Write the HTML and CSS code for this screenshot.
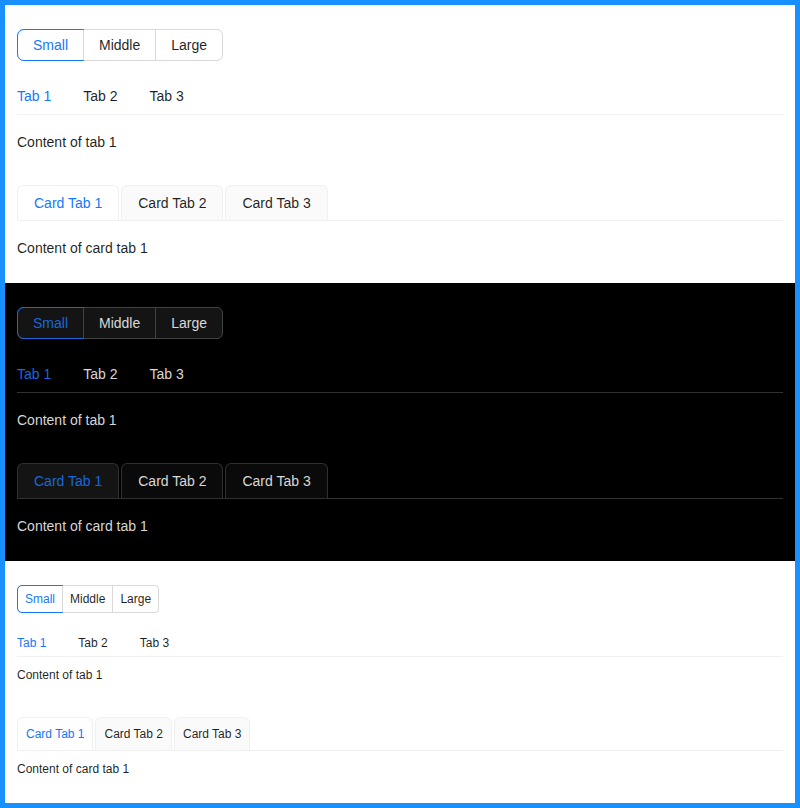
FILE: index.html
```html
<!DOCTYPE html>
<html>
<head>
<meta charset="utf-8">
<link rel="stylesheet" href="styles.css">
</head>
<body>
<div class="frame">
  <section class="demo light">
    <div class="seg">
      <div class="seg-item active">Small</div>
      <div class="seg-item">Middle</div>
      <div class="seg-item">Large</div>
    </div>
    <div class="tabs">
      <div class="tab active">Tab 1</div>
      <div class="tab">Tab 2</div>
      <div class="tab">Tab 3</div>
    </div>
    <div class="content">Content of tab 1</div>
    <div class="cards">
      <div class="card active">Card Tab 1</div>
      <div class="card">Card Tab 2</div>
      <div class="card">Card Tab 3</div>
    </div>
    <div class="content">Content of card tab 1</div>
  </section>
  <section class="demo dark">
    <div class="seg">
      <div class="seg-item active">Small</div>
      <div class="seg-item">Middle</div>
      <div class="seg-item">Large</div>
    </div>
    <div class="tabs">
      <div class="tab active">Tab 1</div>
      <div class="tab">Tab 2</div>
      <div class="tab">Tab 3</div>
    </div>
    <div class="content">Content of tab 1</div>
    <div class="cards">
      <div class="card active">Card Tab 1</div>
      <div class="card">Card Tab 2</div>
      <div class="card">Card Tab 3</div>
    </div>
    <div class="content">Content of card tab 1</div>
  </section>
  <section class="demo light small">
    <div class="seg">
      <div class="seg-item active">Small</div>
      <div class="seg-item">Middle</div>
      <div class="seg-item">Large</div>
    </div>
    <div class="tabs">
      <div class="tab active">Tab 1</div>
      <div class="tab">Tab 2</div>
      <div class="tab">Tab 3</div>
    </div>
    <div class="content">Content of tab 1</div>
    <div class="cards">
      <div class="card active">Card Tab 1</div>
      <div class="card">Card Tab 2</div>
      <div class="card">Card Tab 3</div>
    </div>
    <div class="content">Content of card tab 1</div>
  </section>
</div>
</body>
</html>
```

FILE: styles.css
```css
* { box-sizing: border-box; }
html, body { margin: 0; padding: 0; }
body {
  font-family: "Liberation Sans", Arial, sans-serif;
  font-size: 14px;
  line-height: 22px;
}
.frame {
  width: 800px;
  height: 808px;
  border: 5px solid #1890ff;
  background: #fff;
}
.demo {
  padding: 24px 12px;
  display: flex;
  flex-direction: column;
  align-items: flex-start;
  --text: rgba(0,0,0,0.88);
  --blue: #1677ff;
  --segborder: #d9d9d9;
  --segbg: #fff;
  --line: #f0f0f0;
  --cardbg: #fafafa;
  --cardactive: #fff;
  --cardborder: #f0f0f0;
  color: var(--text);
}
.dark {
  background: #000;
  --text: rgba(255,255,255,0.85);
  --blue: #1668dc;
  --segborder: #424242;
  --segbg: #141414;
  --line: #303030;
  --cardbg: #0a0a0a;
  --cardactive: #141414;
  --cardborder: #303030;
}
.seg {
  display: flex;
  height: 32px;
  border: 1px solid var(--segborder);
  border-radius: 6px;
  background: var(--segbg);
}
.seg-item {
  display: flex;
  align-items: center;
  padding: 0 15px;
  border-left: 1px solid var(--segborder);
}
.seg-item:first-child { border-left: none; }
.seg-item.active {
  color: var(--blue);
  outline: 1px solid var(--blue);
  border-radius: 6px 0 0 6px;
  padding: 0 15px 0 15px;
}
.tabs {
  align-self: stretch;
  display: flex;
  gap: 32px;
  margin-top: 16px;
  padding: 8px 0 7px;
  border-bottom: 1px solid var(--line);
}
.tab.active, .card.active { color: var(--blue); }
.content { margin-top: 16px; }
.cards {
  align-self: stretch;
  display: flex;
  gap: 2px;
  margin-top: 32px;
  border-bottom: 1px solid var(--line);
}
.card {
  padding: 6px 16px;
  border: 1px solid var(--cardborder);
  border-bottom: none;
  border-radius: 6px 6px 0 0;
  background: var(--cardbg);
}
.card.active { background: var(--cardactive); }

.small { font-size: 12px; line-height: 20px; }
.small .seg { height: 28px; border-radius: 4px; }
.small .seg-item { padding: 0 7px; }
.small .seg-item.active { border-radius: 4px 0 0 4px; padding: 0 7px 0 7px; }
.small .tabs { padding: 4px 0 3px; }
.small .content { margin-top: 8px; }
.small .cards { margin-top: 32px; }
.small .card { padding: 6px 8px; }
```
